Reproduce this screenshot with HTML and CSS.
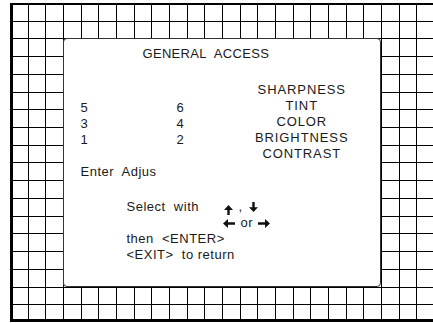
FILE: index.html
```html
<!DOCTYPE html>
<html lang="en">
<head>
    <meta charset="UTF-8">
    <title>General Access</title>
    <link rel="stylesheet" href="styles.css">
</head>
<body>
    <div class="screen">
        <div class="menu">
            <div class="title">GENERAL&nbsp; ACCESS</div>

            <!-- settings table -->
            <div class="table">
                <span></span><span></span><span class="item">SHARPNESS</span>
                <span class="num">5</span><span class="num">6</span><span class="item">TINT</span>
                <span class="num">3</span><span class="num">4</span><span class="item">COLOR</span>
                <span class="num">1</span><span class="num">2</span><span class="item">BRIGHTNESS</span>
                <span></span><span></span><span class="item">CONTRAST</span>
            </div>

            <div class="prompt">Enter&nbsp; Adjus</div>

            <!-- help text -->
            <div class="help">
                <div class="select">
                    <span>Select&nbsp; with</span>
                    <div class="keys">
                        <div class="keys-row top">
                            <svg class="arrow up" width="9" height="10" viewBox="0 0 9 10"><polygon points="4.5,0 9,5 5.7,5 5.7,10 3.3,10 3.3,5 0,5"/></svg>
                            <span class="comma">,</span>
                            <svg class="arrow down" width="9" height="10" viewBox="0 0 9 10"><polygon points="3.3,0 5.7,0 5.7,5.2 9,5.2 4.5,10 0,5.2 3.3,5.2"/></svg>
                        </div>
                        <div class="keys-row">
                            <svg class="arrow left" width="12" height="9" viewBox="0 0 12 9"><polygon points="0,4.5 5,0 5,3.3 12,3.3 12,5.7 5,5.7 5,9"/></svg>
                            <span class="or">or</span>
                            <svg class="arrow right" width="12" height="9" viewBox="0 0 12 9"><polygon points="12,4.5 7,0 7,3.3 0,3.3 0,5.7 7,5.7 7,9"/></svg>
                        </div>
                    </div>
                </div>
                <div>then&nbsp; &lt;ENTER&gt;</div>
                <div>&lt;EXIT&gt;&nbsp; to return</div>
            </div>
        </div>
    </div>
</body>
</html>
```

FILE: styles.css
```css
body {
    margin: 0;
    overflow: hidden;
    background: #fff;
    font-family: "Liberation Sans", Arial, sans-serif;
    font-size: 13px;
    line-height: 16px;
    color: #1a1a1a;
}
.screen {
    margin: 3px 0 0 10px;
    width: 424px;
    height: 319px;
    display: grid;
    grid-template-columns: repeat(24, 1fr);
    grid-template-rows: repeat(18, 1fr);
    background-image:
        repeating-linear-gradient(to right, #000 0 1px, transparent 1px 17.667px),
        repeating-linear-gradient(to bottom, #000 0 1px, transparent 1px 17.722px);
    box-shadow: inset 3px 0 #000, inset 0 2px #000, inset 0 -3px #000;
}
.menu {
    grid-column: 4 / 22;
    grid-row: 3 / 17;
    background: #fff;
    border: 1.5px solid #333;
    border-radius: 4px;
    padding: 7px 13px 0 16.5px;
    letter-spacing: 0.5px;
}
.title {
    padding-left: 62px;
    letter-spacing: 0.3px;
}
.table {
    margin-top: 20px;
    display: grid;
    grid-template-columns: 96px 60px 1fr;
    grid-auto-rows: 16px;
}
.num {
    padding-top: 2px;
}
.item {
    text-align: center;
    letter-spacing: 0.9px;
}
.prompt {
    margin-top: 2px;
}
.help {
    margin-top: 19px;
    padding-left: 46px;
}
.select {
    display: grid;
    grid-template-columns: 96px auto;
}
.keys-row {
    display: flex;
    align-items: center;
    height: 16px;
}
.keys-row.top {
    align-items: flex-start;
}
.arrow {
    display: block;
    fill: #111;
}
.arrow.up {
    margin: 6px 0 0 1px;
}
.comma {
    margin-left: 6px;
}
.arrow.down {
    margin: 3px 0 0 6px;
}
.or {
    margin-left: 6px;
}
.arrow.right {
    margin-left: 5px;
}
```
